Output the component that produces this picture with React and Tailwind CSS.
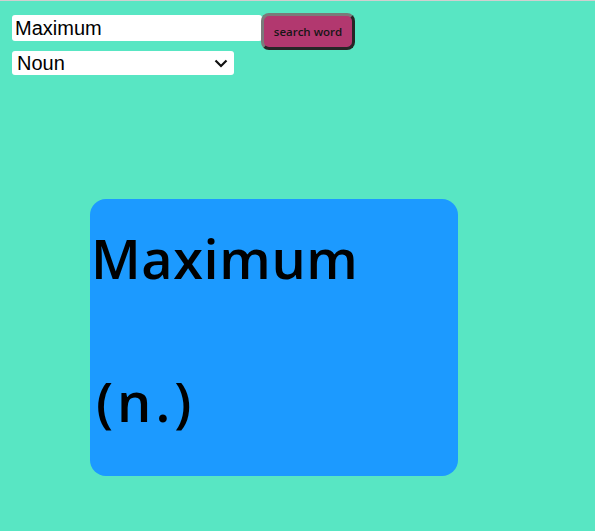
import { useState } from "react";

export default function App() {
  const [word, setWord] = useState("Maximum");
  const [pos, setPos] = useState("Noun");

  return (
    <div className="min-h-screen bg-[#58e6c3] border-t border-[#d0d0d0] pl-[12px] pt-[12px]">
      <div className="flex items-start">
        <input
          value={word}
          onChange={(e) => setWord(e.target.value)}
          className="mt-[2px] w-[250px] h-[26px] bg-white rounded-[3px] px-[3px] text-[20px] text-black outline-none font-['Liberation_Sans',Arial,sans-serif]"
        />
        <button className="-ml-[1px] w-[94px] h-[37px] rounded-[8px] bg-[#b2386f] border-[3px] border-t-[#7a7a7a] border-l-[#7a7a7a] border-r-[#262626] border-b-[#262626] text-[11.5px] font-semibold text-[#161616] font-['Open_Sans',sans-serif]">
          search word
        </button>
      </div>
      <div className="relative mt-[1px] w-[222px]">
        <select
          value={pos}
          onChange={(e) => setPos(e.target.value)}
          className="block appearance-none w-full h-[24px] bg-white rounded-[3px] pl-[5px] text-[20px] leading-[24px] text-black outline-none font-['Liberation_Sans',Arial,sans-serif]"
        >
          <option>Noun</option>
          <option>Verb</option>
          <option>Adjective</option>
          <option>Adverb</option>
        </select>
        <svg
          className="pointer-events-none absolute right-[6px] top-[8px]"
          width="14"
          height="9"
          viewBox="0 0 14 9"
        >
          <path d="M1.5 1.5 L7 7 L12.5 1.5" fill="none" stroke="#111" strokeWidth="2.2" />
        </svg>
      </div>
      <div className="ml-[78px] mt-[124px] w-[368px] h-[277px] rounded-[16px] bg-[#1c9aff] font-['Open_Sans',sans-serif] text-black">
        <h1 className="pl-[1px] pt-[27px] text-[54px] leading-[64px] font-semibold tracking-[0.6px]">{word}</h1>
        <h2 className="pl-[6px] mt-[79px] text-[54px] leading-[64px] font-semibold tracking-[4px]">(n.)</h2>
      </div>
    </div>
  );
}
